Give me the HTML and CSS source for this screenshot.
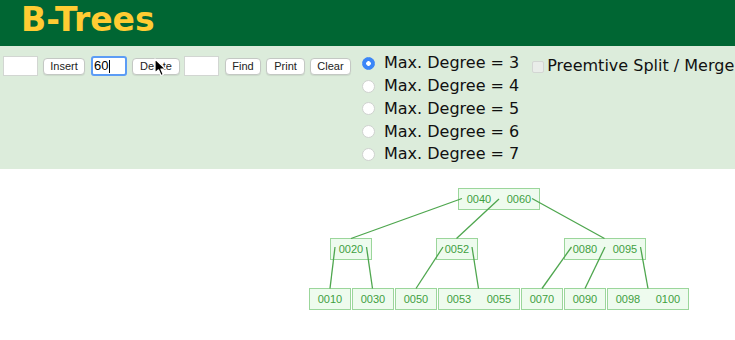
FILE: index.html
```html
<!DOCTYPE html>
<html>
<head>
<title>B-Trees</title>
<link rel="stylesheet" href="styles.css">
</head>
<body>
<div class="header">
    <h1 class="title">B-Trees</h1>
</div>

<div class="controls">
    <div class="ops">
        <input type="text" class="field">
        <button class="btn btn-insert">Insert</button>
        <div class="field field-focus">60<span class="caret"></span></div>
        <button class="btn btn-delete">Delete</button>
        <input type="text" class="field field-find">
        <button class="btn btn-find">Find</button>
        <button class="btn btn-print">Print</button>
        <button class="btn btn-clear">Clear</button>
    </div>

    <div class="degrees">
        <label class="degree"><input type="radio" name="degree" class="radio" checked>Max. Degree = 3</label>
        <label class="degree"><input type="radio" name="degree" class="radio">Max. Degree = 4</label>
        <label class="degree"><input type="radio" name="degree" class="radio">Max. Degree = 5</label>
        <label class="degree"><input type="radio" name="degree" class="radio">Max. Degree = 6</label>
        <label class="degree"><input type="radio" name="degree" class="radio">Max. Degree = 7</label>
    </div>

    <label class="preempt"><input type="checkbox" class="check" disabled>Preemtive Split / Merge</label>

    <!-- mouse pointer over the Delete button -->
    <svg class="cursor" width="14" height="20" viewBox="0 0 14 20">
        <path d="M1 1 L1 15 L4.5 11.8 L7 17.5 L9.3 16.5 L6.9 11 L11.5 11 Z" fill="#000" stroke="#fff" stroke-width="1.2" stroke-linejoin="round"/>
    </svg>
</div>

<svg class="tree" width="735" height="171" viewBox="0 169 735 171">
    <g class="nodes">
        <rect x="458.5" y="188.5" width="81" height="21"/>
        <rect x="330.5" y="238.5" width="41" height="21"/>
        <rect x="436.5" y="238.5" width="41" height="21"/>
        <rect x="564.5" y="238.5" width="81" height="21"/>

        <rect x="309.5" y="288.5" width="41" height="21"/>
        <rect x="352.5" y="288.5" width="41" height="21"/>
        <rect x="395.5" y="288.5" width="41" height="21"/>
        <rect x="438.5" y="288.5" width="81" height="21"/>
        <rect x="521.5" y="288.5" width="41" height="21"/>
        <rect x="564.5" y="288.5" width="41" height="21"/>
        <rect x="607.5" y="288.5" width="81" height="21"/>
    </g>

    <g class="edges">
        <line x1="462" y1="198.5" x2="351" y2="238.5"/>
        <line x1="499" y1="199" x2="456.5" y2="238.5"/>
        <line x1="532" y1="198.5" x2="604.5" y2="238.5"/>

        <line x1="335" y1="247" x2="330" y2="288.5"/>
        <line x1="366.5" y1="247" x2="372.5" y2="288.5"/>
        <line x1="443" y1="247" x2="416" y2="288.5"/>
        <line x1="472" y1="247" x2="478.5" y2="288.5"/>
        <line x1="571.5" y1="247" x2="542" y2="288.5"/>
        <line x1="605" y1="247" x2="585" y2="288.5"/>
        <line x1="640.5" y1="247" x2="648" y2="288.5"/>
    </g>

    <g class="keys">
        <text x="479" y="203">0040</text>
        <text x="519" y="203">0060</text>
        <text x="351" y="253">0020</text>
        <text x="457" y="253">0052</text>
        <text x="585" y="253">0080</text>
        <text x="625" y="253">0095</text>

        <text x="330" y="303">0010</text>
        <text x="373" y="303">0030</text>
        <text x="416" y="303">0050</text>
        <text x="459" y="303">0053</text>
        <text x="499" y="303">0055</text>
        <text x="542" y="303">0070</text>
        <text x="585" y="303">0090</text>
        <text x="628" y="303">0098</text>
        <text x="668" y="303">0100</text>
    </g>
</svg>
</body>
</html>
```

FILE: styles.css
```css
html, body {
    margin: 0;
    padding: 0;
    overflow: hidden;
    background-color: white;
}

body {
    font-family: "DejaVu Sans", Verdana, sans-serif;
    width: 735px;
}

.header {
    background-color: #006633;
    height: 46px;
}

.title {
    margin: 0;
    padding-left: 21px;
    font-family: "DejaVu Sans", Verdana, sans-serif;
    font-size: 33px;
    font-weight: bold;
    line-height: 39px;
    color: #ffcc33;
}

.controls {
    position: relative;
    display: flex;
    align-items: flex-start;
    height: 123px;
    background-color: #dcecdb;
    white-space: nowrap;
}

.ops {
    display: flex;
    align-items: center;
    gap: 5px;
    padding-top: 10px;
    padding-left: 3px;
    height: 20px;
}

.field {
    box-sizing: border-box;
    width: 35px;
    height: 20px;
    margin: 0;
    padding: 0 2px;
    border: 1px solid #d2d6d2;
    background-color: white;
    font-family: "Liberation Sans", Arial, sans-serif;
    font-size: 13px;
}

.field-focus {
    width: 36px;
    margin-left: 1px;
    border: 2px solid #5c9cf5;
    border-radius: 3px;
    line-height: 16px;
    padding-left: 1px;
    color: #000;
    display: flex;
    align-items: center;
}

.caret {
    display: inline-block;
    width: 1px;
    height: 13px;
    margin-left: 1px;
    background-color: #000;
}

.field-find {
    margin-left: -1px;
}

.btn {
    box-sizing: border-box;
    height: 17px;
    margin: 0;
    padding: 0;
    border: 1px solid #c4c8c4;
    border-radius: 4px;
    background-color: white;
    font-family: "Liberation Sans", Arial, sans-serif;
    font-size: 11px;
    color: #222;
    text-align: center;
    box-shadow: 0 1px 1px rgba(0, 0, 0, 0.08);
}

.btn-insert { width: 42px; }
.btn-delete { width: 48px; }
.btn-find { width: 36px; margin-left: 1px; }
.btn-print { width: 39px; }
.btn-clear { width: 41px; }

.degrees {
    display: flex;
    flex-direction: column;
    margin-left: 11px;
    padding-top: 5.5px;
}

.degree {
    display: flex;
    align-items: center;
    height: 22.75px;
    font-size: 16px;
    color: #111;
}

.radio {
    appearance: none;
    box-sizing: border-box;
    width: 13px;
    height: 13px;
    margin: 1px 9px 0 0;
    border: 1px solid #cfd2cf;
    border-radius: 50%;
    background-color: white;
}

.radio:checked {
    border-color: #3b86f7;
    background: radial-gradient(circle, #fff 0 2px, #3b86f7 2.6px);
}

.preempt {
    display: flex;
    align-items: center;
    height: 22.75px;
    margin-left: 13px;
    padding-top: 8px;
    font-size: 16px;
    color: #111;
}

.check {
    appearance: none;
    box-sizing: border-box;
    width: 12px;
    height: 12px;
    margin: 3px 3px 0 0;
    border: 1px solid #d3d6d3;
    border-radius: 2px;
    background-color: #e9ede9;
}

.cursor {
    position: absolute;
    left: 154px;
    top: 12px;
}

.tree {
    display: block;
}

.edges line {
    stroke: #4ea64e;
    stroke-width: 1.3;
}

.nodes rect {
    fill: #eefbee;
    stroke: #9bd69b;
    stroke-width: 1;
}

.keys text {
    font-family: "Liberation Sans", Arial, sans-serif;
    font-size: 11px;
    fill: #3f9f3f;
    text-anchor: middle;
}
```
